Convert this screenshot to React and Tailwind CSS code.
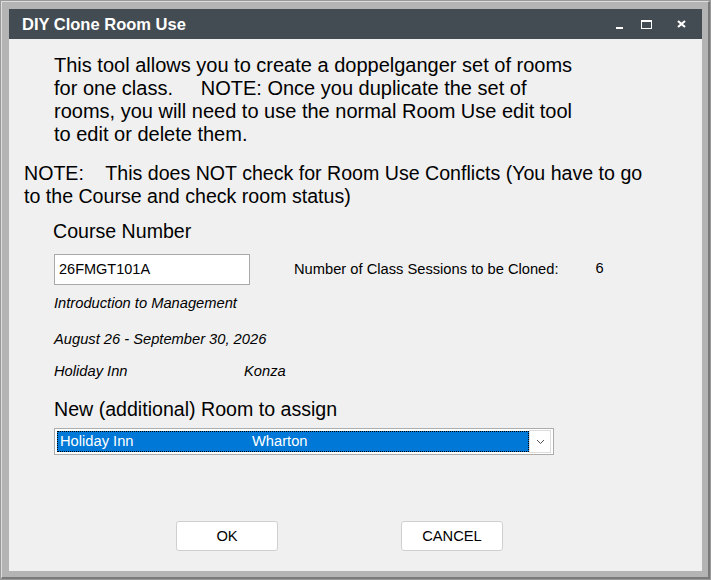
import React from 'react';

const big = "text-[19.6px] leading-[23px]";

export default function App() {
  return (
    <div className="w-[711px] h-[580px] bg-[#9a9a9a] p-px" style={{ fontFamily: '"Liberation Sans", Arial, sans-serif' }}>
      <div className="w-full h-full bg-[#b4b4b4] border-l border-t border-[#dedede] border-r-2 border-b-2 border-r-[#7a7a7a] border-b-[#7a7a7a] pt-[7px] pl-[7px] pr-[5px] pb-[5px]">
        <div className="w-[693px] h-[562px] flex flex-col bg-[#f0f0f0]">
          {/* barra de título */}
          <div className="h-[30px] bg-[#434b53] flex items-center pl-[13px] pr-[16px] text-white">
            <span className="text-[16.5px] font-bold">DIY Clone Room Use</span>
            <div className="ml-auto flex items-center">
              <div className="w-[7px] h-[2px] bg-white mt-[7px]" />
              <div className="ml-[18px] w-[11px] h-[9px] border-white" style={{ borderStyle: 'solid', borderWidth: '2px 1.5px 1.5px 1.5px' }} />
              <svg className="ml-[25px]" width="9" height="8" viewBox="0 0 9 8">
                <path d="M1 1 L8 7 M8 1 L1 7" stroke="white" strokeWidth="2.2" />
              </svg>
            </div>
          </div>

          <div className="flex flex-col text-black">
            <p className="text-[20px] leading-[23px] mt-[15px] ml-[45px]">
              This tool allows you to create a doppelganger set of rooms<br />
              for one class.&nbsp;&nbsp;&nbsp;&nbsp; NOTE: Once you duplicate the set of<br />
              rooms, you will need to use the normal Room Use edit tool<br />
              to edit or delete them.
            </p>
            <p className={`${big} mt-[16px] ml-[15px]`}>
              NOTE:&nbsp;&nbsp;&nbsp; This does NOT check for Room Use Conflicts (You have to go<br />
              to the Course and check room status)
            </p>
            <p className={`${big} mt-[12px] ml-[44px]`}>Course Number</p>

            <div className="mt-[11px] ml-[45px] flex items-center">
              <div className="w-[196px] h-[31px] bg-white border border-[#a9a9a9] flex items-center pl-[4px] text-[14.5px]">26FMGT101A</div>
              <span className="ml-[44px] text-[14.7px] mt-[-1px]">Number of Class Sessions to be Cloned:</span>
              <span className="ml-[37px] text-[14.7px] mt-[-3px]">6</span>
            </div>

            <p className="mt-[8px] ml-[45px] text-[14.7px] leading-[20px] italic">Introduction to Management</p>
            <p className="mt-[16px] ml-[45px] text-[14.7px] leading-[20px] italic">August 26 - September 30, 2026</p>
            <div className="mt-[12px] ml-[45px] text-[14.7px] leading-[20px] italic flex">
              <span className="w-[190px]">Holiday Inn</span>
              <span>Konza</span>
            </div>

            <p className={`${big} mt-[17px] ml-[45px]`}>New (additional) Room to assign</p>

            <div className="mt-[7px] ml-[45px] w-[500px] h-[27px] bg-white border border-[#acacac] flex items-center p-[2px]">
              <div className="flex-1 h-[21px] bg-[#0078d7] border border-dotted border-black flex items-center text-white text-[14.7px]">
                <span className="ml-[2px] w-[192px]">Holiday Inn</span>
                <span>Wharton</span>
              </div>
              <div className="w-[22px] h-[23px] bg-white border border-[#dcdcdc] flex items-center justify-center">
                <svg width="9" height="6" viewBox="0 0 9 6">
                  <path d="M1 1 L4.5 4.5 L8 1" stroke="#505050" strokeWidth="1" fill="none" />
                </svg>
              </div>
            </div>

            <div className="mt-[66px] flex text-[14.7px]">
              <button className="ml-[167px] w-[102px] h-[30px] bg-white border border-[#cfcfcf] rounded-[3px]">OK</button>
              <button className="ml-[123px] w-[102px] h-[30px] bg-white border border-[#cfcfcf] rounded-[3px]">CANCEL</button>
            </div>
          </div>
        </div>
      </div>
    </div>
  );
}
